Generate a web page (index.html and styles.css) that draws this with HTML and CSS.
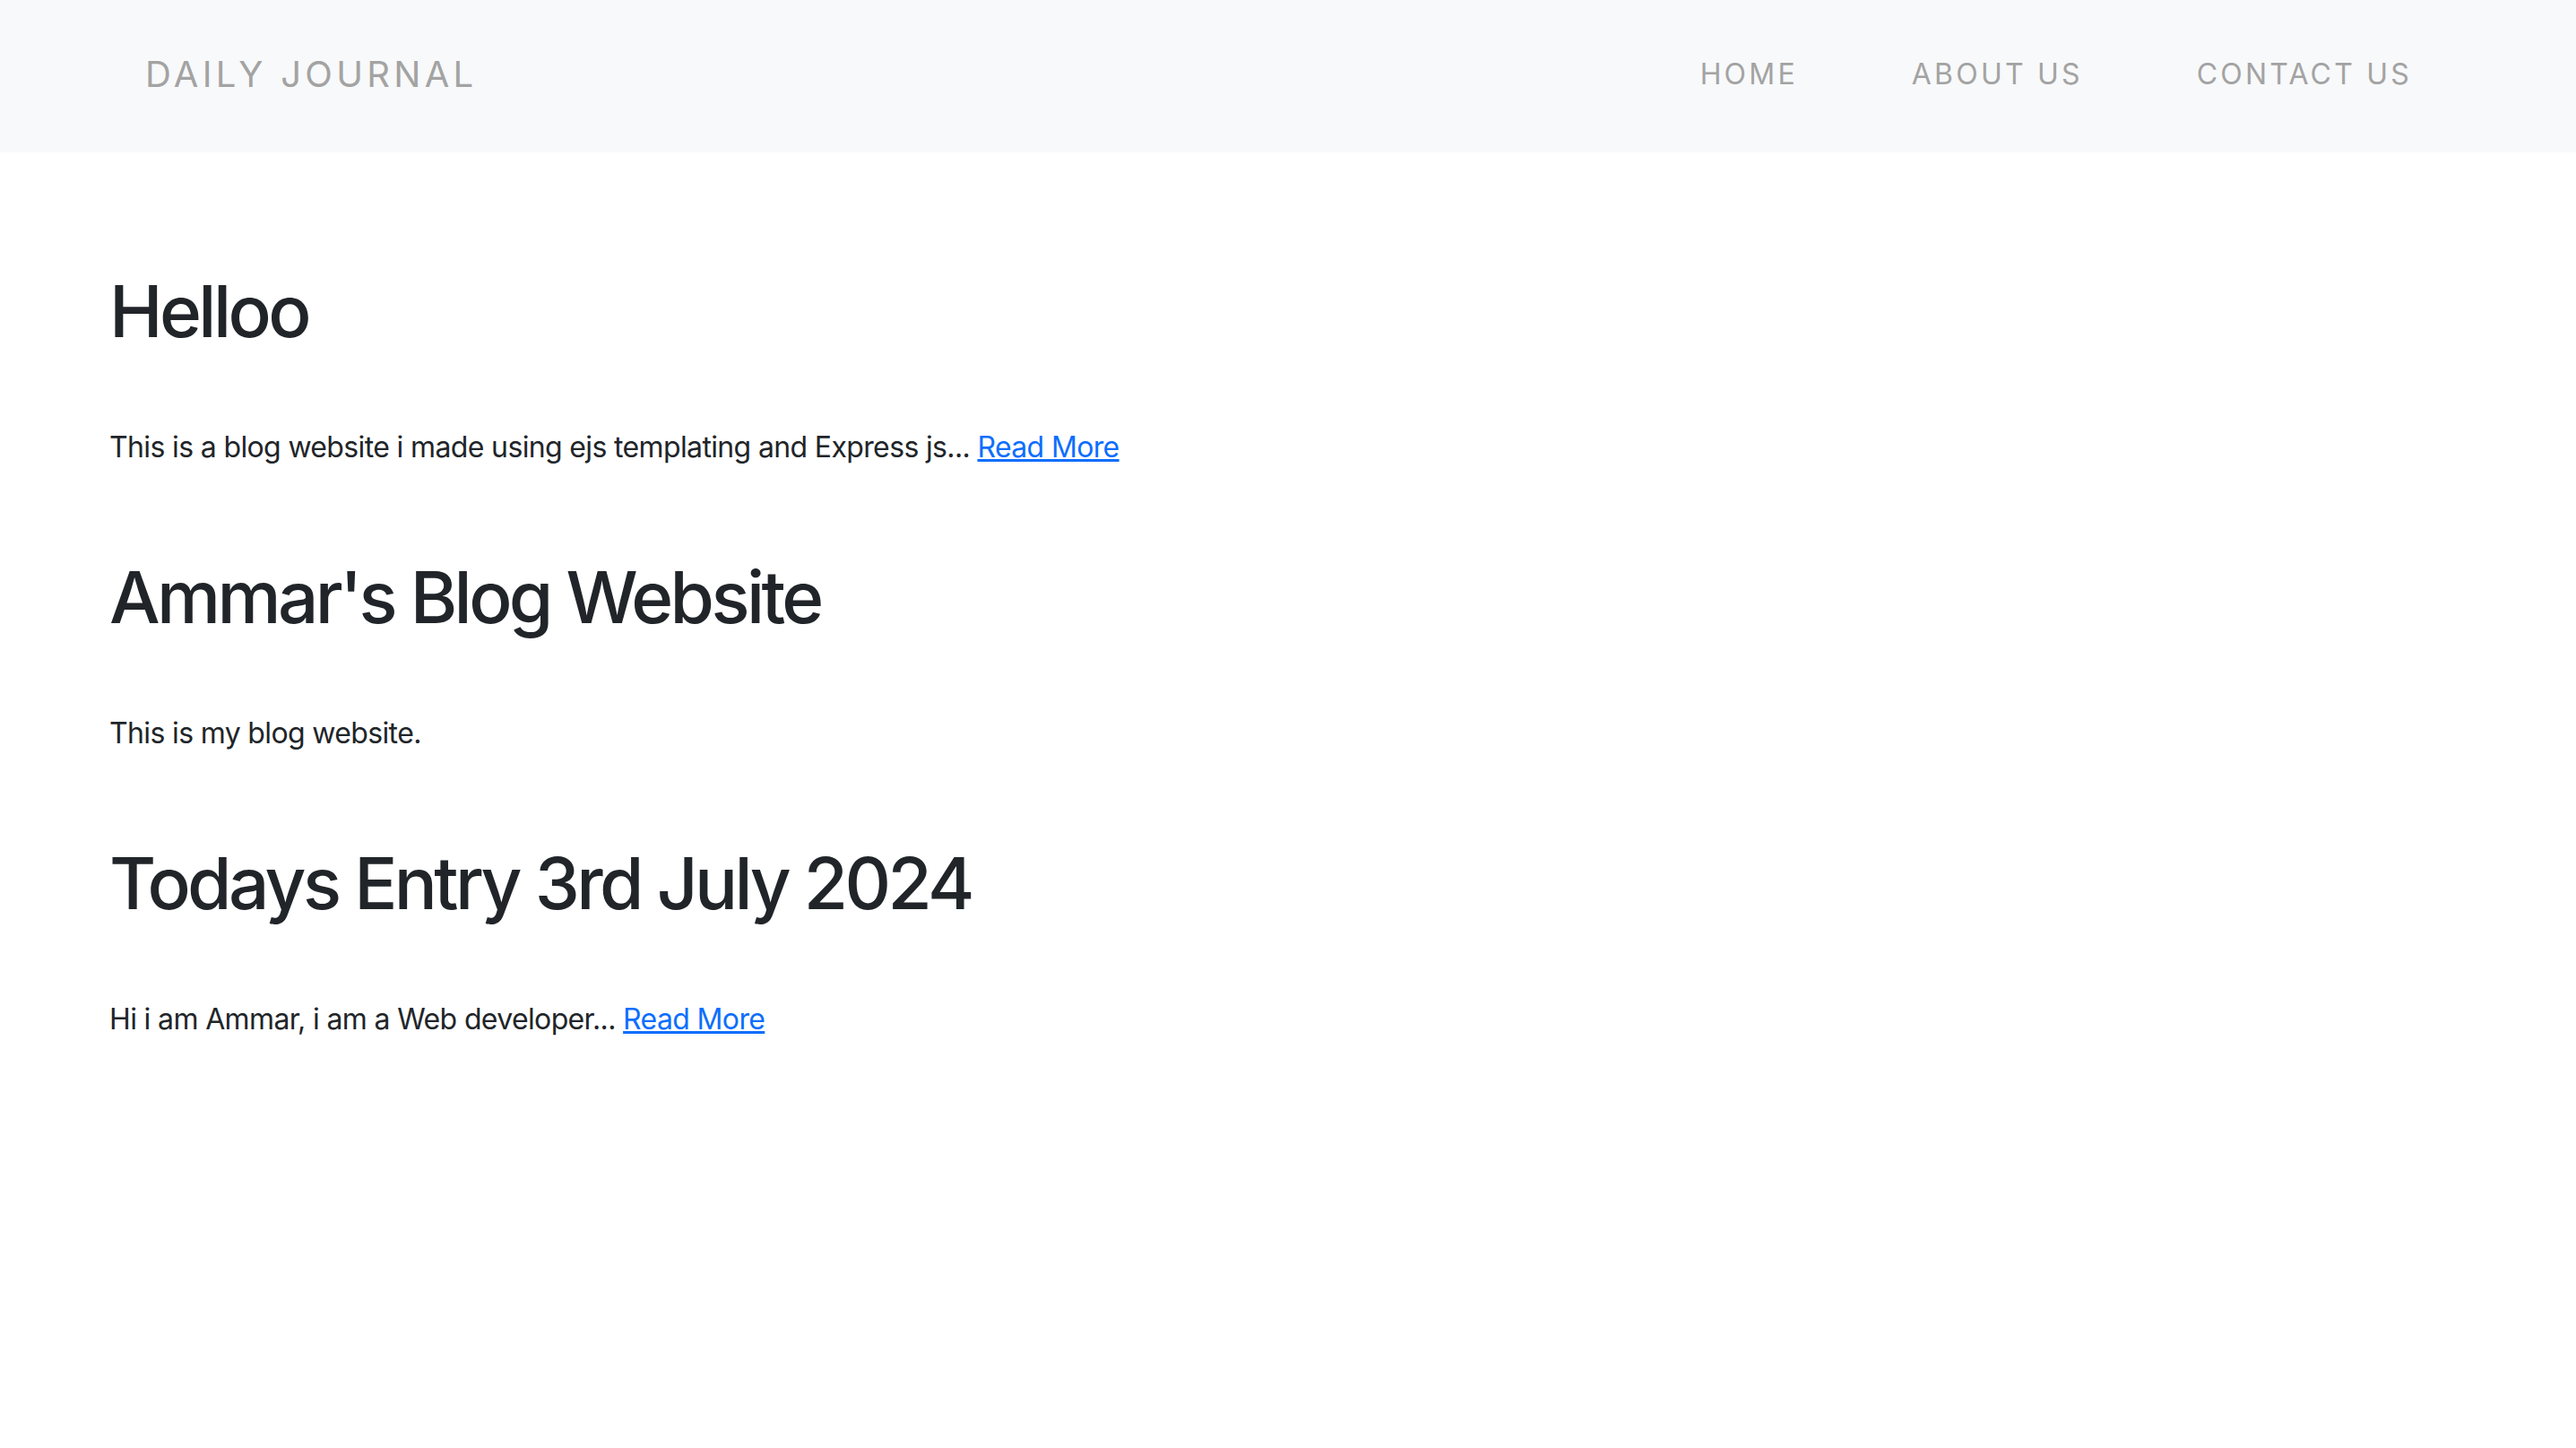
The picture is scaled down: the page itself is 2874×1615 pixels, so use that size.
FILE: index.html
```html
<!DOCTYPE html>
<html lang="en">
<head>
<meta charset="utf-8">
<title>Daily Journal</title>
<link rel="stylesheet" href="styles.css">
</head>
<body>
<nav class="navbar">
  <a class="brand" href="#">DAILY JOURNAL</a>
  <ul class="nav-links">
    <li><a href="#">HOME</a></li>
    <li><a href="#">ABOUT US</a></li>
    <li><a href="#">CONTACT US</a></li>
  </ul>
</nav>
<main class="content">
  <article class="post">
    <h1>Helloo</h1>
    <p>This is a blog website i made using ejs templating and Express js... <a href="#">Read More</a></p>
  </article>
  <article class="post">
    <h1>Ammar's Blog Website</h1>
    <p>This is my blog website.</p>
  </article>
  <article class="post">
    <h1>Todays Entry 3rd July 2024</h1>
    <p>Hi i am Ammar, i am a Web developer... <a href="#">Read More</a></p>
  </article>
</main>
</body>
</html>
```
FILE: styles.css
```css
* { box-sizing: border-box; }
html, body { margin: 0; padding: 0; }
body {
  font-family: Inter, "Noto Sans", "Liberation Sans", sans-serif;
  color: #212529;
  background: #fff;
  font-size: 32px;
  line-height: 1.5;
}
.navbar {
  height: 170px;
  background: #f8f9fa;
  display: flex;
  align-items: center;
  justify-content: space-between;
  padding: 0 183px 4px 162px;
}
.brand {
  font-size: 40px;
  color: #a3a3a3;
  text-decoration: none;
  letter-spacing: 0.107em;
  line-height: 1.2;
}
.nav-links {
  list-style: none;
  display: flex;
  gap: 127px;
  margin: 0;
  padding: 0;
}
.nav-links a {
  font-size: 32px;
  color: #a3a3a3;
  text-decoration: none;
  letter-spacing: 0.1em;
}
.content {
  padding: 129px 122px 0;
  display: flex;
  flex-direction: column;
  gap: 95px;
}
.post h1 {
  font-size: 80px;
  font-weight: 500;
  line-height: 1.2;
  letter-spacing: -0.045em;
  margin: 0 0 80px;
}
.post p {
  margin: 0;
  letter-spacing: -0.02em;
}
.post a {
  color: #0d6efd;
  text-decoration: underline;
}
```
